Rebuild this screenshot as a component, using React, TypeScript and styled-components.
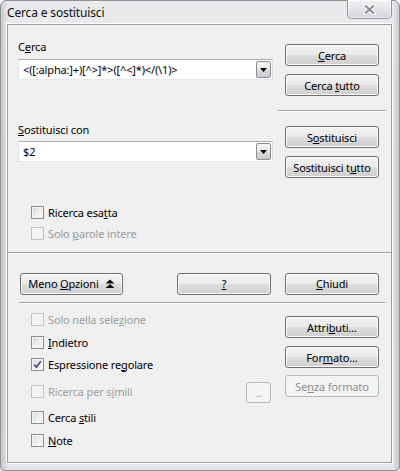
import React from "react";
import styled, { createGlobalStyle, css } from "styled-components";

const Global = createGlobalStyle`
  html, body { margin: 0; padding: 0; }
  body { width: 400px; height: 471px; overflow: hidden; }
  * { box-sizing: border-box; }
`;

const FONT = `"Noto Sans", "Open Sans", Arial, sans-serif`;

const Win = styled.div`
  width: 400px;
  height: 471px;
  display: flex;
  flex-direction: column;
  font-family: ${FONT};
  font-size: 11px;
  letter-spacing: -0.15px;
  color: #000;
  border-radius: 6px 6px 4px 4px;
  border: 1px solid #8d9094;
  background:
    linear-gradient(90deg, rgba(150,140,150,0.35) 0px, rgba(255,255,255,0) 7px, rgba(255,255,255,0) 392px, rgba(120,120,130,0.35) 400px),
    linear-gradient(180deg, #e9eaec 0%, #dfe1e4 40%, #e3e5e8 100%);
`;

const TitleBar = styled.div`
  height: 23px;
  display: flex;
  align-items: flex-start;
  padding-left: 6px;
`;

const Title = styled.div`
  margin-top: 4px;
  font-size: 12px;
  line-height: 16px;
  color: #111;
`;

const CloseBtn = styled.div`
  margin-left: auto;
  margin-right: 7px;
  margin-top: -1px;
  width: 45px;
  height: 19px;
  display: flex;
  align-items: center;
  justify-content: center;
  border: 1px solid rgba(70, 75, 85, 0.55);
  border-top: none;
  border-radius: 0 0 5px 5px;
  background: linear-gradient(180deg, #f1f2f4 0%, #e2e4e8 50%, #d2d5da 100%);
  box-shadow: inset 0 0 0 1px rgba(255,255,255,0.7);
`;

const Client = styled.div`
  flex: 1;
  margin: 0 7px 7px 6px;
  background: #f0f0f0;
  border: 1px solid #9a9ea3;
  box-shadow: 0 0 0 1px #ffffff;
  display: flex;
  flex-direction: column;
`;

const TopSection = styled.div`
  height: 227px;
  display: flex;
  padding-left: 10px;
`;

const LeftCol = styled.div`
  width: 255px;
  padding-top: 14px;
  display: flex;
  flex-direction: column;
`;

const RightCol = styled.div`
  width: 108px;
  margin-left: 5px;
  padding-top: 19px;
  display: flex;
  flex-direction: column;
`;

const Label = styled.div<{ $mt?: number }>`
  height: 15px;
  line-height: 15px;
  margin-top: ${(p) => p.$mt ?? 0}px;
`;

const Combo = styled.div<{ $mt: number }>`
  margin-top: ${(p) => p.$mt}px;
  height: 21px;
  background: #fff;
  border: 1px solid #abadb3;
  border-left-color: #e2e3ea;
  border-right-color: #dbdfe6;
  border-bottom-color: #e3e9ef;
  display: flex;
  align-items: center;
  padding: 0 1px 0 4px;
`;

const ComboText = styled.div`
  flex: 1;
  line-height: 15px;
  white-space: nowrap;
  overflow: hidden;
`;

const DropBtn = styled.div`
  width: 15px;
  height: 17px;
  border: 1px solid #8b8e93;
  border-radius: 2px;
  background: linear-gradient(180deg, #f4f4f4 0%, #e9e9e9 50%, #d9d9d9 51%, #cdcdcd 100%);
  display: flex;
  align-items: center;
  justify-content: center;
`;

const Button = styled.div<{ $mt?: number; $ml?: number; $w?: number; $disabled?: boolean }>`
  margin-top: ${(p) => p.$mt ?? 0}px;
  margin-left: ${(p) => p.$ml ?? 0}px;
  width: ${(p) => p.$w ?? 94}px;
  height: 22px;
  flex: none;
  display: flex;
  align-items: center;
  justify-content: center;
  gap: 6px;
  border-radius: 3px;
  line-height: 15px;
  white-space: nowrap;
  ${(p) =>
    p.$disabled
      ? css`
          border: 1px solid #b7babc;
          background: #f4f4f4;
          color: #8f8f8f;
        `
      : css`
          border: 1px solid #707070;
          background: linear-gradient(180deg, #f2f2f2 0%, #ebebeb 48%, #dddddd 52%, #cfcfcf 100%);
          box-shadow: inset 0 0 0 1px #fbfbfb;
          color: #000;
        `}
`;

const VSep = styled.div<{ $mt: number; $mb: number }>`
  margin-top: ${(p) => p.$mt}px;
  margin-bottom: ${(p) => p.$mb}px;
  height: 2px;
  border-top: 1px solid #a0a0a0;
  border-bottom: 1px solid #ffffff;
`;

const FullSep = styled.div<{ $ml: number; $mr: number }>`
  margin: 0 ${(p) => p.$mr}px 0 ${(p) => p.$ml}px;
  height: 2px;
  border-top: 1px solid #a0a0a0;
  border-bottom: 1px solid #ffffff;
`;

const CheckRow = styled.div<{ $mt: number; $disabled?: boolean }>`
  margin-top: ${(p) => p.$mt}px;
  height: 16px;
  display: flex;
  align-items: center;
  color: ${(p) => (p.$disabled ? "#9d9d9d" : "#000")};
  line-height: 15px;
  white-space: nowrap;
`;

const Box = styled.div<{ $disabled?: boolean }>`
  width: 13px;
  height: 13px;
  flex: none;
  margin-right: 4px;
  display: flex;
  align-items: center;
  justify-content: center;
  ${(p) =>
    p.$disabled
      ? css`
          border: 1px solid #c3c3c3;
          background: #f3f3f3;
        `
      : css`
          border: 1px solid #8e8f8f;
          background: linear-gradient(135deg, #d3d5d8 0%, #eceef0 50%, #fbfbfb 100%);
          box-shadow: inset 0 0 0 1px #f4f4f4;
        `}
`;

const ChecksArea = styled.div`
  padding-left: 13px;
`;

const BottomRow = styled.div`
  display: flex;
  align-items: center;
  padding: 11px 0 0 12px;
  height: 48px;
`;

const OptionsArea = styled.div`
  flex: 1;
  display: flex;
  padding-left: 23px;
`;

const OptLeft = styled.div`
  width: 240px;
  padding-top: 7px;
  display: flex;
  flex-direction: column;
`;

const OptRight = styled.div`
  margin-left: 14px;
  padding-top: 12px;
  display: flex;
  flex-direction: column;
`;

const Grow = styled.span`
  flex: 1;
`;

const DotsBtn = styled.div`
  width: 25px;
  height: 21px;
  flex: none;
  border: 1px solid #b7babc;
  border-radius: 3px;
  background: #f4f4f4;
  color: #9a9a9a;
  font-size: 9px;
  display: flex;
  align-items: flex-end;
  justify-content: center;
  padding-bottom: 4px;
  line-height: 8px;
  margin-top: 3px;
`;

const U = styled.span`
  text-decoration: underline;
  text-underline-offset: 1px;
`;

const Arrow = () => (
  <svg width="7" height="4" viewBox="0 0 7 4">
    <path d="M0 0 H7 L3.5 4 Z" fill="#000" />
  </svg>
);

const CloseIcon = () => (
  <svg width="13" height="11" viewBox="0 0 13 11">
    <path
      d="M2 1.5 L11 9.5 M11 1.5 L2 9.5"
      stroke="#ffffff"
      strokeWidth="4"
      strokeLinecap="round"
    />
    <path d="M2 1.5 L11 9.5 M11 1.5 L2 9.5" stroke="#8a8d92" strokeWidth="2.2" />
  </svg>
);

const UpIcon = () => (
  <svg width="10" height="10" viewBox="0 0 10 10">
    <path d="M5 0.5 L9.5 4.5 H0.5 Z" fill="#111" />
    <path d="M5 5 L9.5 9 H0.5 Z" fill="#111" />
  </svg>
);

const Check = () => (
  <svg width="9" height="9" viewBox="0 0 9 9">
    <path d="M1.3 4.6 L3.4 7.2 L7.8 1.2" stroke="#3b4d7a" strokeWidth="1.7" fill="none" />
  </svg>
);

type CB = { children: React.ReactNode; mt: number; disabled?: boolean; checked?: boolean; extra?: React.ReactNode };

const CheckItem = ({ children, mt, disabled, checked, extra }: CB) => (
  <CheckRow $mt={mt} $disabled={disabled}>
    <Box $disabled={disabled}>{checked && <Check />}</Box>
    <span>{children}</span>
    {extra && (
      <>
        <Grow />
        {extra}
      </>
    )}
  </CheckRow>
);

export default function App() {
  return (
    <>
      <Global />
      <Win>
        <TitleBar>
          <Title>Cerca e sostituisci</Title>
          <CloseBtn>
            <CloseIcon />
          </CloseBtn>
        </TitleBar>
        <Client>
          <TopSection>
            <LeftCol>
              <Label>
                C<U>e</U>rca
              </Label>
              <Combo $mt={5}>
                <ComboText>{"<([:alpha:]+)[^>]*>([^<]*)</(\\1)>"}</ComboText>
                <DropBtn>
                  <Arrow />
                </DropBtn>
              </Combo>
              <Label $mt={42}>
                <U>S</U>ostituisci con
              </Label>
              <Combo $mt={4}>
                <ComboText>$2</ComboText>
                <DropBtn>
                  <Arrow />
                </DropBtn>
              </Combo>
              <ChecksArea>
                <CheckItem mt={42}>
                  Ricerca esa<U>t</U>ta
                </CheckItem>
                <CheckItem mt={5} disabled>
                  Solo <U>p</U>arole intere
                </CheckItem>
              </ChecksArea>
            </LeftCol>
            <RightCol>
              <Button $ml={7}>
                <span>
                  <U>C</U>erca
                </span>
              </Button>
              <Button $ml={7} $mt={8}>
                <span>
                  Cerca <U>t</U>utto
                </span>
              </Button>
              <VSep $mt={14} $mb={14} />
              <Button $ml={7}>
                <span>
                  S<U>o</U>stituisci
                </span>
              </Button>
              <Button $ml={7} $mt={8}>
                <span>
                  Sostituisci t<U>u</U>tto
                </span>
              </Button>
            </RightCol>
          </TopSection>
          <FullSep $ml={0} $mr={0} />
          <BottomRow>
            <Button $w={103}>
              <span>
                Meno <U>O</U>pzioni
              </span>
              <UpIcon />
            </Button>
            <Button $ml={54}>
              <U>?</U>
            </Button>
            <Button $ml={14}>
              <span>
                <U>C</U>hiudi
              </span>
            </Button>
          </BottomRow>
          <FullSep $ml={11} $mr={6} />
          <OptionsArea>
            <OptLeft>
              <CheckItem mt={0} disabled>
                Solo nella sele<U>z</U>ione
              </CheckItem>
              <CheckItem mt={7}>
                <U>I</U>ndietro
              </CheckItem>
              <CheckItem mt={6} checked>
                Espressione re<U>g</U>olare
              </CheckItem>
              <CheckItem mt={11} disabled extra={<DotsBtn>...</DotsBtn>}>
                Ricerca per s<U>i</U>mili
              </CheckItem>
              <CheckItem mt={10}>
                Cerca <U>s</U>tili
              </CheckItem>
              <CheckItem mt={7}>
                <U>N</U>ote
              </CheckItem>
            </OptLeft>
            <OptRight>
              <Button>
                <span>
                  Attri<U>b</U>uti...
                </span>
              </Button>
              <Button $mt={8}>
                <span>
                  For<U>m</U>ato...
                </span>
              </Button>
              <Button $mt={7} $disabled>
                <span>
                  Se<U>n</U>za formato
                </span>
              </Button>
            </OptRight>
          </OptionsArea>
        </Client>
      </Win>
    </>
  );
}
